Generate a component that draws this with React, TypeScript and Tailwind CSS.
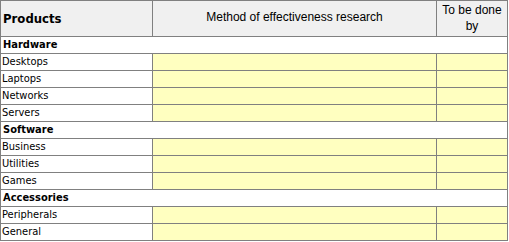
const sections = [
  { name: 'Hardware', items: ['Desktops', 'Laptops', 'Networks', 'Servers'] },
  { name: 'Software', items: ['Business', 'Utilities', 'Games'] },
  { name: 'Accessories', items: ['Peripherals', 'General'] }
];

export default function App() {
  return (
    <div className="w-[509px] h-[242px] bg-white">
      <div
        className="w-[508px] grid grid-cols-[151px_283px_70px] gap-px bg-[#808080] border border-[#808080] text-black"
        style={{ fontFamily: '"DejaVu Sans Condensed", "DejaVu Sans", Tahoma, sans-serif', fontStretch: 'condensed' }}
      >
        {/* header */}
        <div className="h-[35px] bg-[#f0f0f0] flex items-center pl-[2px] text-[13px] font-bold">Products</div>
        <div
          className="h-[35px] bg-[#f0f0f0] flex items-center justify-center text-[12px] pb-[3px]"
          style={{ fontFamily: '"Liberation Sans", Arial, sans-serif', fontStretch: 'normal' }}
        >
          Method of effectiveness research
        </div>
        <div
          className="h-[35px] bg-[#f0f0f0] flex items-start justify-center text-center text-[12px] leading-[16px] pt-[1px]"
          style={{ fontFamily: '"Liberation Sans", Arial, sans-serif', fontStretch: 'normal' }}
        >
          To be done<br />by
        </div>

        {sections.map((section) => (
          <>
            <div key={section.name} className="col-span-3 h-[16px] bg-white flex items-center pl-[2px] text-[11px] font-bold">
              {section.name}
            </div>
            {section.items.map((item) => (
              <>
                <div key={item} className="h-[16px] bg-white flex items-center pl-[1px] text-[11px]">{item}</div>
                <div className="h-[16px] bg-[#ffffc0]" />
                <div className="h-[16px] bg-[#ffffc0]" />
              </>
            ))}
          </>
        ))}
      </div>
    </div>
  );
}
